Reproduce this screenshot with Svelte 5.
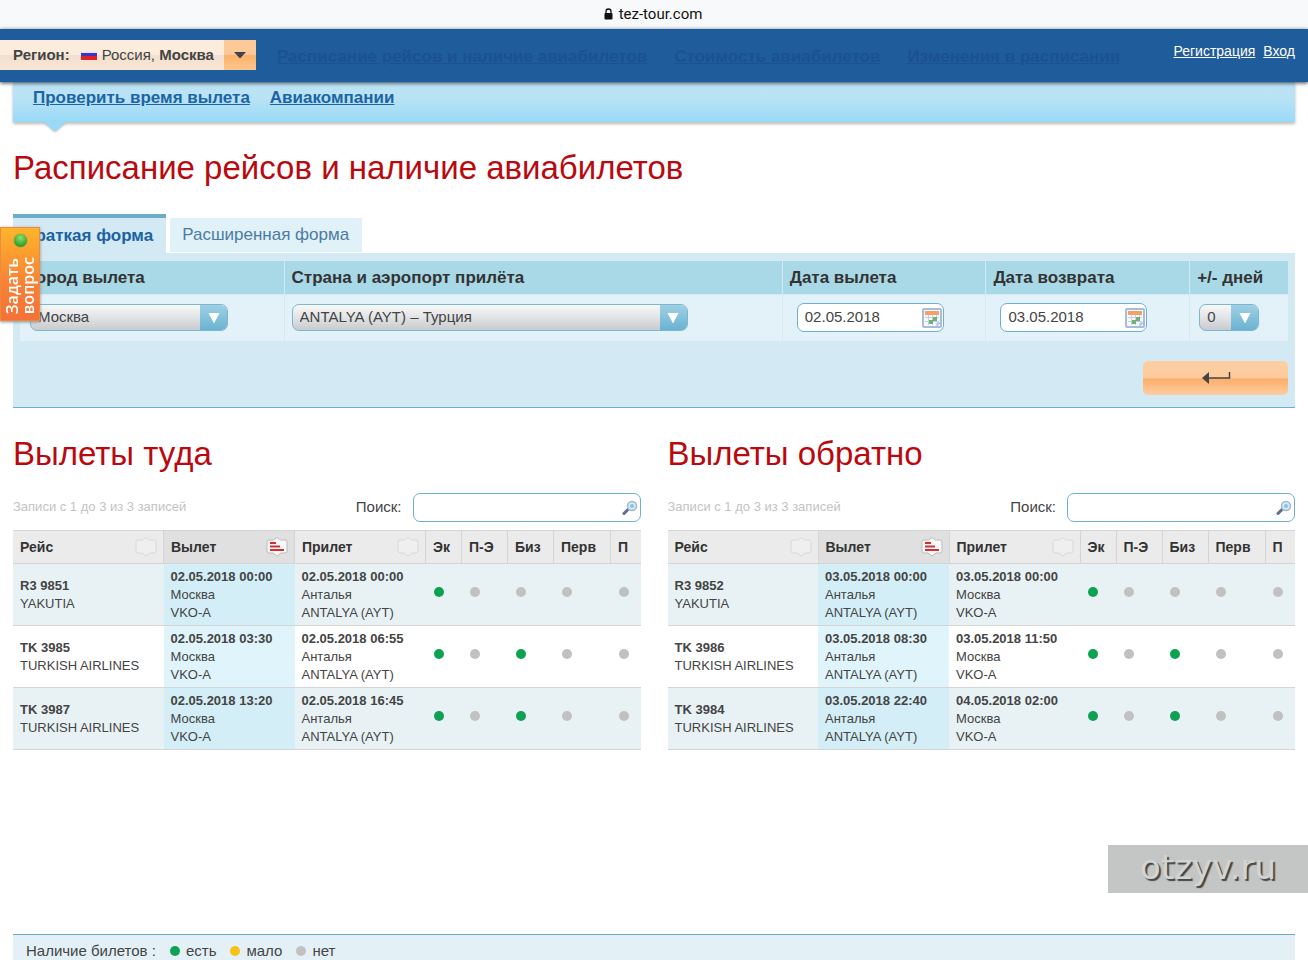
<script lang="ts">
	type Status = 'yes' | 'few' | 'no';

	const nav = ['Расписание рейсов и наличие авиабилетов', 'Стоимость авиабилетов', 'Изменения в расписании'];
	const subnav = ['Проверить время вылета', 'Авиакомпании'];
	const classes = ['Эк', 'П-Э', 'Биз', 'Перв', 'П'];
	const legend: { status: Status; text: string }[] = [
		{ status: 'yes', text: 'есть' },
		{ status: 'few', text: 'мало' },
		{ status: 'no', text: 'нет' }
	];
	const statusText = { yes: 'есть', few: 'мало', no: 'нет' };

	const moscow = ['Москва', 'VKO-A'];
	const antalya = ['Анталья', 'ANTALYA (AYT)'];
	const economy: Status[] = ['yes', 'no', 'no', 'no', 'no'];
	const business: Status[] = ['yes', 'no', 'yes', 'no', 'no'];

	const directions = [
		{
			id: 'there',
			title: 'Вылеты туда',
			from: moscow,
			to: antalya,
			flights: [
				{ code: 'R3 9851', airline: 'YAKUTIA', departure: '02.05.2018 00:00', arrival: '02.05.2018 00:00', seats: economy },
				{ code: 'TK 3985', airline: 'TURKISH AIRLINES', departure: '02.05.2018 03:30', arrival: '02.05.2018 06:55', seats: business },
				{ code: 'TK 3987', airline: 'TURKISH AIRLINES', departure: '02.05.2018 13:20', arrival: '02.05.2018 16:45', seats: business }
			]
		},
		{
			id: 'back',
			title: 'Вылеты обратно',
			from: antalya,
			to: moscow,
			flights: [
				{ code: 'R3 9852', airline: 'YAKUTIA', departure: '03.05.2018 00:00', arrival: '03.05.2018 00:00', seats: economy },
				{ code: 'TK 3986', airline: 'TURKISH AIRLINES', departure: '03.05.2018 08:30', arrival: '03.05.2018 11:50', seats: business },
				{ code: 'TK 3984', airline: 'TURKISH AIRLINES', departure: '03.05.2018 22:40', arrival: '04.05.2018 02:00', seats: business }
			]
		}
	];

	let departureDate = '02.05.2018';
	let returnDate = '03.05.2018';
</script>

{#snippet arrow()}
	<span class="arrow">
		<svg width="12" height="12" viewBox="0 0 12 12"><path d="M0.500 1h11L6 11.500z" fill="#fff" /></svg>
	</span>
{/snippet}

{#snippet calendar()}
	<button class="calendar" type="button" aria-label="Календарь">
		<svg width="20" height="20" viewBox="0 0 20 20">
			<rect x="1" y="1" width="18" height="18" rx="1" fill="#f6f8fc" stroke="#a9bbde" stroke-width="2" />
			<rect x="3" y="3" width="14" height="4" fill="#f4a067" />
			<path d="M3 9.500h14M3 13.500h14M6.500 7v10M10.500 7v10M14.500 7v7" stroke="#c6cfdd" fill="none" />
			<path d="M11 9h4v4h-4zM7 12h4v4H7z" fill="#6db277" />
			<path d="M15 18v-3h3z" fill="#dce6f5" stroke="#a9bbde" />
		</svg>
	</button>
{/snippet}

{#snippet sortIcon(active: boolean)}
	<svg width="22" height="20" viewBox="0 0 22 20">
		<path
			d="M3 3h4.500L11 0.500 14.500 3H19q2 0 2 2v9q0 2-2 2h-4l-4 3-4-3H3q-2 0-2-2V5q0-2 2-2z"
			fill={active ? '#f8f8f8' : '#efefef'}
			stroke={active ? '#bcbcbc' : '#d8d8d8'}
		/>
		{#if active}
			<path d="M4 6h6M4 9.500h10M4 13h14" stroke="#d42f33" stroke-width="2" />
		{/if}
	</svg>
{/snippet}

<div class="page">
	<div class="address">
		<svg width="9" height="12" viewBox="0 0 9 12">
			<path d="M2 6V3.500a2.500 2.500 0 0 1 5 0V6" fill="none" stroke="#111" stroke-width="1.300" />
			<rect x="0.500" y="5" width="8" height="6.500" rx="1" fill="#111" />
		</svg>
		tez-tour.com
	</div>

	<header>
		<button class="region" type="button">
			<span class="region-name">
				<b>Регион:</b>
				<svg width="16" height="9" viewBox="0 0 16 9">
					<rect width="16" height="9" fill="#eae4f4" />
					<rect y="2" width="16" height="4" fill="#3b35c4" />
					<rect y="5" width="16" height="4" fill="#e2202c" />
				</svg>
				<span>Россия, <b>Москва</b></span>
			</span>
			<span class="region-arrow">
				<svg width="14" height="8" viewBox="0 0 14 8"><path d="M1 1h12L7 7.500z" fill="#40444a" /></svg>
			</span>
		</button>
		<nav class="main-nav">
			{#each nav as item}
				<a href="#top">{item}</a>
			{/each}
		</nav>
		<div class="account">
			<a href="#register">Регистрация</a>
			<a href="#login">Вход</a>
		</div>
	</header>

	<main>
		<nav class="subnav">
			{#each subnav as item}
				<a href="#top">{item}</a>
			{/each}
			<svg class="pointer" width="26" height="13" viewBox="0 0 26 13">
				<path d="M1 0h24L15 9q-2 2-4 0z" fill="#9adaf6" />
			</svg>
		</nav>

		<h1>Расписание рейсов и наличие авиабилетов</h1>

		<div class="tabs">
			<button class="tab active" type="button">Краткая форма</button>
			<button class="tab" type="button">Расширенная форма</button>
		</div>

		<form on:submit|preventDefault>
			<div class="fields">
				<div class="field">
					<label for="city">Город вылета</label>
					<div class="control">
						<div class="select city">
							<select id="city"><option>Москва</option></select>
							{@render arrow()}
						</div>
					</div>
				</div>
				<div class="field">
					<label for="airport">Страна и аэропорт прилёта</label>
					<div class="control">
						<div class="select airport">
							<select id="airport"><option>ANTALYA (AYT) – Турция</option></select>
							{@render arrow()}
						</div>
					</div>
				</div>
				<div class="field">
					<label for="departure">Дата вылета</label>
					<div class="control dates">
						<div class="date">
							<input id="departure" type="text" bind:value={departureDate} />
							{@render calendar()}
						</div>
					</div>
				</div>
				<div class="field">
					<label for="return">Дата возврата</label>
					<div class="control dates">
						<div class="date">
							<input id="return" type="text" bind:value={returnDate} />
							{@render calendar()}
						</div>
					</div>
				</div>
				<div class="field">
					<label for="days">+/- дней</label>
					<div class="control">
						<div class="select days">
							<select id="days"><option>0</option></select>
							{@render arrow()}
						</div>
					</div>
				</div>
			</div>
			<button class="submit" type="submit" aria-label="Найти">
				<svg width="30" height="14" viewBox="0 0 30 14">
					<path d="M28.500 1v6H6" fill="none" stroke="#444" stroke-width="1.500" />
					<path d="M1 7l7-6v12z" fill="#444" />
				</svg>
			</button>
		</form>

		<div class="results">
			{#each directions as direction}
				<section>
					<h2>{direction.title}</h2>
					<div class="toolbar">
						<span class="info">Записи с 1 до 3 из 3 записей</span>
						<label for="search-{direction.id}">Поиск:</label>
						<div class="search">
							<input id="search-{direction.id}" type="text" />
							<svg width="16" height="16" viewBox="0 0 16 16">
								<path d="M2 13.500l4-4" stroke="#5c6f90" stroke-width="3" stroke-linecap="round" />
								<circle cx="10" cy="6" r="4.500" fill="#d4ecfa" stroke="#a9b6c6" stroke-width="1.500" />
								<circle cx="10" cy="6" r="2" fill="#84c3ea" />
							</svg>
						</div>
					</div>
					<table>
						<colgroup>
							<col />
							<col class="col-time" />
							<col class="col-time" />
							<col class="col-ec" />
							<col class="col-biz" />
							<col class="col-biz" />
							<col class="col-first" />
							<col class="col-last" />
						</colgroup>
						<thead>
							<tr>
								<th><div class="sort">Рейс {@render sortIcon(false)}</div></th>
								<th class="sorted"><div class="sort">Вылет {@render sortIcon(true)}</div></th>
								<th><div class="sort">Прилет {@render sortIcon(false)}</div></th>
								{#each classes as name}
									<th>{name}</th>
								{/each}
							</tr>
						</thead>
						<tbody>
							{#each direction.flights as flight}
								<tr>
									<td><b>{flight.code}</b><br />{flight.airline}</td>
									<td class="sorted"><b>{flight.departure}</b><br />{direction.from[0]}<br />{direction.from[1]}</td>
									<td><b>{flight.arrival}</b><br />{direction.to[0]}<br />{direction.to[1]}</td>
									{#each flight.seats as seat}
										<td class="seat"><span class="dot {seat}" role="img" aria-label={statusText[seat]}></span></td>
									{/each}
								</tr>
							{/each}
						</tbody>
					</table>
				</section>
			{/each}
		</div>
	</main>

	<footer>
		<span>Наличие билетов :</span>
		{#each legend as item}
			<span class="legend"><span class="dot {item.status}"></span>{item.text}</span>
		{/each}
	</footer>

	<button class="ask" type="button">
		<span class="online"></span>
		<span class="ask-text">Задать<br />вопрос</span>
	</button>
	<div class="watermark">otzyv.ru</div>
</div>

<style>
	:global(body) {
		background: #fff;
	}

	.page {
		display: flex;
		flex-direction: column;
		min-height: 100vh;
		font-family: "Liberation Sans", Arial, sans-serif;
		font-size: 13px;
		line-height: 18px;
		color: #444;
	}

	button,
	input,
	select {
		box-sizing: border-box;
		margin: 0;
		font: inherit;
		color: inherit;
	}

	button {
		border: 0;
		padding: 0;
		cursor: pointer;
	}

	.address {
		display: flex;
		align-items: center;
		justify-content: center;
		gap: 6px;
		box-sizing: border-box;
		height: 29px;
		padding: 0 2px 2px 0;
		background: #f8f9fb;
		font-family: Roboto, sans-serif;
		font-size: 15px;
		color: #111;
	}

	header {
		position: relative;
		z-index: 1;
		display: flex;
		align-items: flex-start;
		box-sizing: border-box;
		height: 53px;
		padding: 11px 13px 0 0;
		background: #1f5c9b;
		box-shadow: 0 1px 4px #345;
	}

	.region {
		display: flex;
		width: 256px;
		height: 30px;
		background: linear-gradient(#fcecdb 50%, #f0e0d0 50%, #fae6d2);
		font-size: 15px;
	}

	.region-name {
		display: flex;
		flex: 1;
		align-items: center;
		gap: 5px;
		height: 30px;
		padding-left: 13px;
	}

	.region-name svg {
		margin-left: 6px;
	}

	.region-arrow {
		display: flex;
		align-items: center;
		justify-content: center;
		width: 32px;
		height: 30px;
		background: linear-gradient(#fdc998 50%, #fdb069 50%, #fdc58f);
	}

	.main-nav {
		display: flex;
		flex: 1;
		gap: 27px;
		padding: 8px 0 0 21px;
		font-size: 17px;
		font-weight: bold;
	}

	.main-nav a {
		color: #1b5192;
	}

	.account {
		display: flex;
		gap: 8px;
		padding-top: 2px;
		font-size: 14px;
	}

	.account a {
		color: #fff;
	}

	main {
		padding: 0 13px;
	}

	.subnav {
		position: relative;
		display: flex;
		gap: 20px;
		height: 33px;
		padding: 7px 20px 0;
		background: linear-gradient(#bde3f4, #b9e3f5 40%, #98daf7);
		box-shadow: 0 2px 3px #bbb;
		font-size: 17px;
		font-weight: bold;
	}

	.subnav a {
		color: #1c64a4;
	}

	.pointer {
		position: absolute;
		left: 29px;
		top: 39px;
		filter: drop-shadow(0 1px 1px #bbb);
	}

	h1,
	h2 {
		margin: 0;
		font-size: 33px;
		font-weight: normal;
		line-height: 40px;
		color: #b9090f;
	}

	h1 {
		margin: 26px 0;
	}

	.tabs {
		display: flex;
		align-items: flex-end;
		gap: 4px;
	}

	.tab {
		height: 34px;
		margin-bottom: 1px;
		padding: 0 13px 0 12px;
		background: #e1f1f8;
		font-size: 17px;
		color: #4b7ca4;
	}

	.tab.active {
		height: 39px;
		margin-bottom: 0;
		border-top: 4px solid #69adc7;
		background: #d3eaf5;
		font-weight: bold;
		color: #1c62a2;
	}

	form {
		display: flex;
		flex-direction: column;
		padding: 8px 7px 12px;
		border-bottom: 1px solid #6aafcd;
		background: #d3eaf5;
	}

	.fields {
		display: grid;
		grid-template-columns: 264fr 498fr 203fr 203fr 98fr;
		gap: 1px;
	}

	.field label {
		display: block;
		padding: 0 7px;
		background: #a9d8e7;
		font-size: 17px;
		font-weight: bold;
		line-height: 33px;
		color: #333;
	}

	.control {
		padding: 9px 7px 10px;
		border-top: 1px solid #d3eaf5;
		background: #e3f1f8;
	}

	.control.dates {
		padding: 8px 14px 9px;
	}

	.field:first-child .control {
		padding-left: 10px;
	}

	.field:last-child .control {
		padding-left: 9px;
	}

	.select {
		position: relative;
		height: 27px;
		font-size: 15px;
	}

	.city {
		width: 198px;
	}

	.airport {
		width: 396px;
	}

	.days {
		width: 60px;
	}

	select {
		width: 100%;
		height: 27px;
		padding: 0 34px 2px 7px;
		border: 1px solid #7cb7d2;
		border-radius: 7px;
		background: linear-gradient(#f8f8f8, #e2e3e5 50%, #c7cacf);
		appearance: none;
	}

	.arrow {
		position: absolute;
		top: 1px;
		right: 1px;
		display: flex;
		align-items: center;
		justify-content: center;
		width: 27px;
		height: 25px;
		border-radius: 0 6px 6px 0;
		background: linear-gradient(#9fd0e4, #6ab3d2);
		pointer-events: none;
	}

	.date {
		position: relative;
		max-width: 147px;
	}

	input {
		display: block;
		width: 100%;
		height: 29px;
		border: 1px solid #6cb0d3;
		border-radius: 7px;
		background: #fff;
	}

	.date input {
		padding: 0 32px 3px 7px;
		font-size: 15px;
	}

	.calendar {
		position: absolute;
		top: 5px;
		right: 2px;
		height: 20px;
		background: none;
	}

	.calendar svg {
		display: block;
	}

	.submit {
		display: flex;
		align-items: center;
		justify-content: center;
		align-self: flex-end;
		width: 145px;
		height: 34px;
		margin-top: 20px;
		border-radius: 5px;
		background: linear-gradient(#fccfa3, #fdcb9d 50%, #fdae68 52%, #fdcda2);
	}

	.results {
		display: grid;
		grid-template-columns: 1fr 1fr;
		gap: 27px;
		padding-top: 26px;
	}

	.toolbar {
		display: flex;
		align-items: center;
		gap: 11px;
		margin: 19px 0 8px;
		font-size: 15px;
	}

	.toolbar label,
	.info {
		padding-bottom: 2px;
	}

	.info {
		flex: 1;
		font-size: 13px;
		color: #c3c3c3;
	}

	.search {
		position: relative;
		width: 228px;
	}

	.search input {
		padding: 0 28px 0 7px;
	}

	.search svg {
		position: absolute;
		top: 7px;
		right: 3px;
	}

	table {
		width: 100%;
		border-collapse: collapse;
		table-layout: fixed;
	}

	.col-time {
		width: 131px;
	}

	.col-ec {
		width: 36px;
	}

	.col-biz {
		width: 46px;
	}

	.col-first {
		width: 57px;
	}

	.col-last {
		width: 30px;
	}

	th {
		height: 32px;
		padding: 0 0 0 7px;
		border-top: 1px solid #d5d5d5;
		border-left: 1px solid #d5d5d5;
		background: #ebebeb;
		font-size: 14px;
		text-align: left;
		color: #333;
	}

	th:first-child {
		border-left: 0;
	}

	th.sorted {
		background: #e0e0e0;
	}

	.sort {
		display: flex;
		align-items: center;
		justify-content: space-between;
		padding-right: 6px;
	}

	td {
		height: 61px;
		padding: 0 0 0 7px;
		border-top: 1px solid #d5d5d5;
		border-bottom: 1px solid #d5d5d5;
	}

	tbody tr:nth-child(odd) {
		background: #e8f2f5;
	}

	td.sorted {
		background: #e0f5fb;
	}

	tbody tr:nth-child(odd) .sorted {
		background: #d3eef6;
	}

	.seat {
		padding: 0 0 4px 8px;
		height: 57px;
	}

	.dot {
		display: inline-block;
		width: 10px;
		height: 10px;
		border-radius: 50%;
	}

	.yes {
		background: #0da152;
	}

	.few {
		background: #f7c212;
	}

	.no {
		background: #c1c1c1;
	}

	footer {
		display: flex;
		gap: 14px;
		margin: auto 13px 0;
		padding: 7px 13px 0;
		border-top: 1px solid #6aa9cd;
		background: #e3f1f7;
		font-size: 15px;
	}

	.legend {
		display: flex;
		align-items: center;
		gap: 6px;
	}

	.ask {
		position: fixed;
		top: 227px;
		left: 0;
		z-index: 2;
		display: flex;
		flex-direction: column;
		align-items: center;
		justify-content: space-between;
		width: 40px;
		height: 94px;
		padding: 6px 0;
		border: 1px solid #ee8a3c;
		background: linear-gradient(#fdb52c, #f98136 60%, #f57136);
		box-shadow: 0 1px 3px #888;
		font-family: "Open Sans", sans-serif;
		font-size: 16px;
		font-weight: 600;
		line-height: 16px;
		color: #fff;
	}

	.online {
		width: 13px;
		height: 13px;
		border-radius: 50%;
		background: radial-gradient(circle at 50% 30%, #8be36c, #2fa12d 70%);
		box-shadow: 0 0 1px #276b1c;
	}

	.ask-text {
		writing-mode: vertical-rl;
		transform: rotate(180deg);
		text-align: left;
	}

	.watermark {
		position: fixed;
		right: 0;
		bottom: 67px;
		width: 200px;
		padding-bottom: 4px;
		background: #c4c6c5;
		font-family: "DejaVu Sans", sans-serif;
		font-size: 34px;
		line-height: 44px;
		text-align: center;
		color: #d2d4d3;
		text-shadow: 2px 2px 1px #444;
	}
</style>
